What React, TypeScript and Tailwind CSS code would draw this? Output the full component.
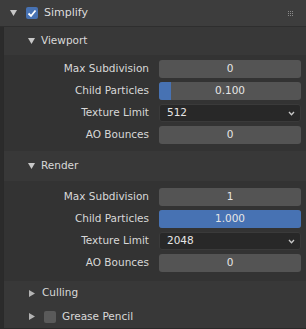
import React from 'react';

const font = { fontFamily: '"DejaVu Sans", Verdana, sans-serif' };

const TriDown = ({ className = '' }: { className?: string }) => (
  <svg className={className} width="7" height="6" viewBox="0 0 7 6">
    <path d="M0 0 L7 0 L3.5 6 Z" fill="#c8c8c8" />
  </svg>
);

const TriRight = ({ className = '' }: { className?: string }) => (
  <svg className={className} width="6" height="7" viewBox="0 0 6 7">
    <path d="M0 0 L6 3.5 L0 7 Z" fill="#b4b4b4" />
  </svg>
);

const NumField = ({ value }: { value: string }) => (
  <div className="flex h-[18px] w-[142px] items-center justify-center rounded-[3px] bg-[#545454] text-[10.5px] text-[#e6e6e6]">
    {value}
  </div>
);

const Slider = ({ value, pct }: { value: string; pct: number }) => (
  <div className="relative flex h-[18px] w-[142px] items-center justify-center overflow-hidden rounded-[3px] bg-[#545454] text-[10.5px] text-[#e6e6e6]">
    <div className="absolute inset-y-0 left-0 bg-[#4772b3]" style={{ width: `${pct}%` }} />
    <span className="relative">{value}</span>
  </div>
);

const Dropdown = ({ value }: { value: string }) => (
  <div className="flex h-[18px] w-[142px] items-center justify-between rounded-[3px] border border-[#3a3a3a] bg-[#282828] pl-[7px] pr-[5px] text-[10.5px] text-[#e6e6e6]">
    <span>{value}</span>
    <svg width="7" height="5" viewBox="0 0 7 5">
      <path d="M1 1 L3.5 3.8 L6 1" stroke="#c8c8c8" strokeWidth="1.3" fill="none" />
    </svg>
  </div>
);

const Row = ({ label, children }: { label: string; children: React.ReactNode }) => (
  <div className="flex h-[22px] items-center">
    <div className="w-[145px] whitespace-nowrap text-right text-[10.5px] text-[#d8d8d8]">{label}</div>
    <div className="ml-[10px]">{children}</div>
  </div>
);

const SubHeader = ({ label, h }: { label: string; h: string }) => (
  <div className={`flex ${h} items-center bg-[#383838] pl-[24px] text-[10.5px] text-[#d8d8d8]`}>
    <TriDown />
    <span className="ml-[6px]">{label}</span>
  </div>
);

export default function App() {
  return (
    <div className="h-[329px] w-[306px] overflow-hidden bg-[#2b2b2b]" style={font}>
      {/* Simplify header */}
      <div className="flex h-[27px] items-center border-b border-[#2e2e2e] bg-[#3d3d3d] pl-[10px] pr-[13px]">
        <TriDown />
        <div className="ml-[9px] flex h-[12px] w-[12px] items-center justify-center rounded-[2px] bg-[#4772b3]">
          <svg width="10" height="9" viewBox="0 0 10 9">
            <path d="M1.5 4.5 L4 7 L8.5 1.5" stroke="#ffffff" strokeWidth="1.8" fill="none" />
          </svg>
        </div>
        <span className="ml-[6px] text-[11px] text-[#dcdcdc]">Simplify</span>
        <div className="ml-auto grid grid-cols-3 gap-[1px]">
          {Array.from({ length: 9 }).map((_, i) => (
            <div key={i} className="h-[1px] w-[1px] bg-[#8a8a8a]" />
          ))}
        </div>
      </div>

      <div className="ml-[3px] border-l border-[#2a2a2a] bg-[#333333]">
        <SubHeader label="Viewport" h="h-[28px]" />
        <div className="bg-[#333333] pb-[5px] pt-[3px]">
          <Row label="Max Subdivision"><NumField value="0" /></Row>
          <Row label="Child Particles"><Slider value="0.100" pct={8.5} /></Row>
          <Row label="Texture Limit"><Dropdown value="512" /></Row>
          <Row label="AO Bounces"><NumField value="0" /></Row>
        </div>

        <SubHeader label="Render" h="h-[30px]" />
        <div className="bg-[#333333] pb-[7px] pt-[5px]">
          <Row label="Max Subdivision"><NumField value="1" /></Row>
          <Row label="Child Particles"><Slider value="1.000" pct={100} /></Row>
          <Row label="Texture Limit"><Dropdown value="2048" /></Row>
          <Row label="AO Bounces"><NumField value="0" /></Row>
        </div>

        <div className="flex h-[24px] items-center bg-[#383838] pl-[25px] text-[10.5px] text-[#d8d8d8]">
          <TriRight />
          <span className="ml-[7px]">Culling</span>
        </div>
        <div className="flex h-[24px] items-center border-b border-[#2a2a2a] bg-[#383838] pl-[25px] text-[10.5px] text-[#d8d8d8]">
          <TriRight />
          <div className="ml-[9px] h-[12px] w-[12px] rounded-[2px] bg-[#5a5a5a]" />
          <span className="ml-[6px]">Grease Pencil</span>
        </div>
      </div>
    </div>
  );
}
